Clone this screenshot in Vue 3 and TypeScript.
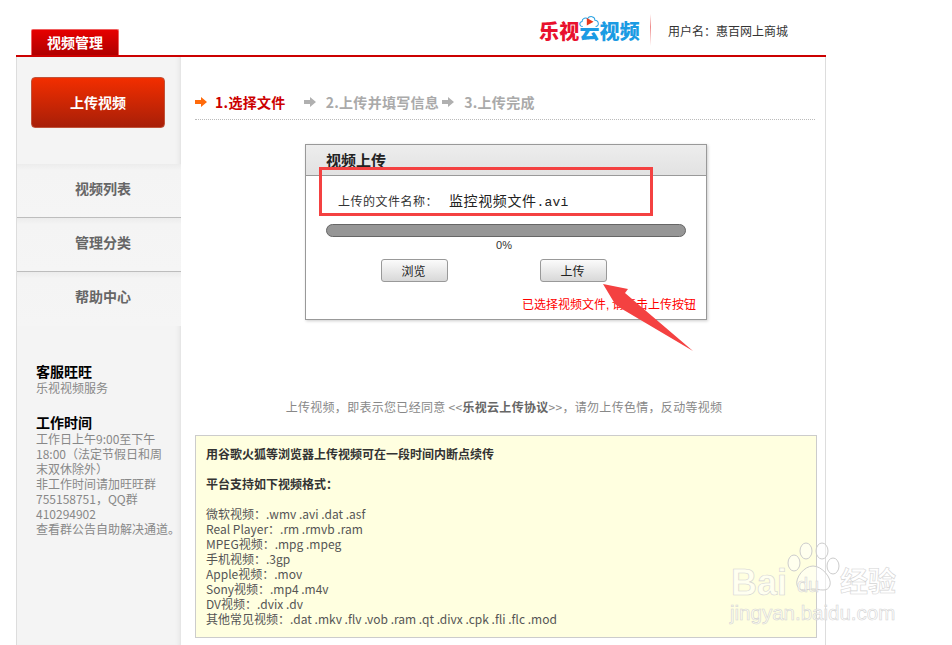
<script setup lang="ts">
const menuItems = ['视频列表', '管理分类', '帮助中心']

const workLines = [
  '工作日上午9:00至下午',
  '18:00（法定节假日和周',
  '末双休除外）',
  '非工作时间请加旺旺群',
  '755158751，QQ群',
  '410294902',
  '查看群公告自助解决通道。',
]

const formats = [
  '微软视频：.wmv .avi .dat .asf',
  'Real Player：.rm .rmvb .ram',
  'MPEG视频：.mpg .mpeg',
  '手机视频：.3gp',
  'Apple视频：.mov',
  'Sony视频：.mp4 .m4v',
  'DV视频：.dvix .dv',
  '其他常见视频：.dat .mkv .flv .vob .ram .qt .divx .cpk .fli .flc .mod',
]
</script>

<template>
  <div class="page">
    <header class="topbar">
      <div class="tab">视频管理</div>
      <div class="brand">
        <div class="logo">
          <span class="logo-red">乐视</span><span class="logo-blue">云视频</span>
          <svg class="logo-cloud" width="23" height="13" viewBox="0 0 34 18">
            <path d="M7 16.500C2 16.500 1 10 6 9C6 4 12 2.500 14 5C17 0 25 1 25 7C31 7 32 16.500 26 16.500" fill="#fff" stroke="#2ba3e3" stroke-width="1.500" />
            <path d="M13 4L23 9.500L13 15Z" fill="#e8391c" />
          </svg>
        </div>
        <div class="divider"></div>
        <div class="user">用户名：惠百网上商城</div>
      </div>
    </header>

    <div class="shell">
      <aside class="side">
        <button class="upload-btn">上传视频</button>
        <nav class="menu">
          <a v-for="item in menuItems" :key="item" class="menu-item">{{ item }}</a>
        </nav>
        <div class="service">
          <h4>客服旺旺</h4>
          <p>乐视视频服务</p>
          <h4 class="work-title">工作时间</h4>
          <p v-for="line in workLines" :key="line">{{ line }}</p>
        </div>
      </aside>

      <main class="main">
        <div class="steps">
          <svg class="step-arrow" width="12" height="12" viewBox="0 0 12 12"><path d="M0 4H6V1L12 6L6 11V8H0Z" fill="#ff6a0a" /></svg>
          <span class="step active">1.选择文件</span>
          <svg class="step-arrow second" width="12" height="12" viewBox="0 0 12 12"><path d="M0 4H6V1L12 6L6 11V8H0Z" fill="#b0b0b0" /></svg>
          <span class="step">2.上传并填写信息</span>
          <svg class="step-arrow third" width="12" height="12" viewBox="0 0 12 12"><path d="M0 4H6V1L12 6L6 11V8H0Z" fill="#b0b0b0" /></svg>
          <span class="step">3.上传完成</span>
        </div>

        <section class="dialog">
          <div class="dialog-head">视频上传</div>
          <div class="dialog-body">
            <div class="file-row">
              <span class="file-label">上传的文件名称：</span>
              <span class="file-name">监控视频文件<span class="file-ext">.avi</span></span>
            </div>
            <div class="progress"></div>
            <div class="percent">0%</div>
            <div class="actions">
              <button class="btn">浏览</button>
              <button class="btn">上传</button>
            </div>
            <div class="status">已选择视频文件<span class="comma">,</span> 请点击上传按钮</div>
          </div>
          <div class="mark-box"></div>
          <svg class="mark-arrow" width="100" height="75" viewBox="0 0 100 75">
            <path d="M5 3L30 8L27 12L95 70L24 28L17 23Z" fill="#f44141" />
          </svg>
        </section>

        <p class="agreement">上传视频，即表示您已经同意 &lt;&lt;<b>乐视云上传协议</b>&gt;&gt;，请勿上传色情，反动等视频</p>

        <section class="notice">
          <h5>用谷歌火狐等浏览器上传视频可在一段时间内断点续传</h5>
          <h5>平台支持如下视频格式：</h5>
          <p v-for="line in formats" :key="line">{{ line }}</p>
        </section>
      </main>
    </div>

    <div class="watermark">
      <svg class="paw" width="54" height="58" viewBox="0 0 54 58">
        <g fill="#fff" fill-opacity=".45" stroke="#ccc" stroke-width="1">
          <ellipse cx="20" cy="9" rx="6" ry="8" />
          <ellipse cx="36" cy="9" rx="6" ry="8" />
          <ellipse cx="8" cy="21" rx="6" ry="8" />
          <ellipse cx="47" cy="24" rx="6" ry="8" />
          <path d="M27 24C18 24 9 36 11 43C13 51 22 47 27 47C33 47 42 51 44 43C46 36 36 24 27 24Z" />
        </g>
      </svg>
      <span class="wm-bai">Bai</span>
      <span class="wm-du">du</span>
      <span class="wm-jy">经验</span>
      <span class="wm-url">jingyan.baidu.com</span>
    </div>
  </div>
</template>

<style scoped>
.page {
  position: relative;
  width: 952px;
  height: 645px;
  overflow: hidden;
  background: #fff;
  font-family: "Noto Sans CJK SC", "Liberation Sans", sans-serif;
  font-size: 12px;
  color: #666;
}

.topbar {
  display: flex;
  justify-content: space-between;
  align-items: flex-end;
  width: 810px;
  height: 57px;
  margin-left: 16px;
  padding-left: 15px;
  box-sizing: border-box;
  border-bottom: 2px solid #cc0000;
}

.tab {
  width: 88px;
  height: 26px;
  box-sizing: border-box;
  border: 1px solid #f06060;
  border-bottom: none;
  border-radius: 2px 2px 0 0;
  background: linear-gradient(#e60000, #b00000);
  color: #fff;
  font-size: 14px;
  font-weight: 700;
  line-height: 24px;
  text-align: center;
}

.brand {
  display: flex;
  align-items: center;
  height: 55px;
  padding-right: 38px;
  padding-top: 5px;
  box-sizing: border-box;
}

.logo {
  position: relative;
  font-size: 20px;
  font-weight: 900;
  line-height: 26px;
  letter-spacing: .2px;
  margin-top: 2px;
  white-space: nowrap;
}

.logo-red {
  color: #e8112d;
}

.logo-blue {
  color: #1b9be3;
}

.logo-cloud {
  position: absolute;
  left: 39px;
  top: -3px;
}

.divider {
  width: 1px;
  height: 32px;
  margin: 0 17px 0 10px;
  background: linear-gradient(rgba(230, 90, 90, 0), #ee8a8a 40%, rgba(230, 90, 90, 0));
}

.user {
  color: #333;
  white-space: nowrap;
}

.shell {
  display: flex;
  width: 810px;
  height: 588px;
  margin-left: 16px;
  box-sizing: border-box;
  border-right: 1px solid #ddd;
}

.side {
  flex: none;
  width: 165px;
  box-sizing: border-box;
  padding-top: 20px;
  border-left: 1px solid #ddd;
  background: #f4f4f4;
  box-shadow: inset -5px 0 5px -4px #ddd;
}

.upload-btn {
  display: block;
  width: 134px;
  height: 51px;
  margin-left: 14px;
  padding: 0 0 2px;
  border: 1px solid #c0533a;
  border-radius: 4px;
  background: linear-gradient(#f22e00, #a81f08);
  color: #fff;
  font: 700 14px "Noto Sans CJK SC", sans-serif;
}

.menu {
  margin-top: 36px;
}

.menu-item {
  display: block;
  height: 54px;
  box-sizing: border-box;
  padding-left: 8px;
  border-bottom: 1px solid #bdbdbd;
  background: linear-gradient(#ececec, #f4f4f4 12%, #f5f5f5);
  color: #666;
  font-size: 14px;
  font-weight: 700;
  line-height: 49px;
  text-align: center;
}

.menu-item:last-child {
  border-bottom: none;
}

.service {
  margin-top: 36px;
  padding-left: 19px;
  color: #888;
  line-height: 15px;
  white-space: nowrap;
}

.service h4 {
  margin: 0;
  color: #000;
  font-size: 14px;
  line-height: 18px;
}

.service p {
  margin: 0;
}

.service .work-title {
  margin-top: 18px;
}

.main {
  flex: 1;
  min-width: 0;
  padding: 0 0 0 14px;
}

.steps {
  display: flex;
  align-items: center;
  width: 620px;
  height: 63px;
  padding: 28px 0 0 0;
  box-sizing: border-box;
  border-bottom: 1px dotted #bbb;
  font-size: 14px;
  font-weight: 700;
  letter-spacing: .3px;
  color: #aaa;
}

.step-arrow {
  flex: none;
}

.step.active {
  margin-left: 8px;
  color: #cc0000;
}

.step-arrow.second {
  margin: 0 10px 0 18px;
}

.step-arrow.third {
  margin: 0 10px 0 3px;
}

.dialog {
  position: relative;
  width: 402px;
  height: 176px;
  box-sizing: border-box;
  margin: 24px 0 0 110px;
  border: 1px solid #999;
  box-shadow: 1px 1px 3px #ccc;
}

.dialog-head {
  height: 31px;
  box-sizing: border-box;
  padding-left: 20px;
  border-bottom: 1px solid #999;
  background: linear-gradient(#ededed, #e2e2e2);
  color: #222;
  font-size: 15px;
  font-weight: 700;
  line-height: 29px;
}

.dialog-body {
  padding: 15px 20px 0;
}

.file-row {
  display: flex;
  align-items: center;
  height: 18px;
  padding-left: 12px;
  color: #333;
}

.file-label {
  width: 111px;
  letter-spacing: .5px;
}

.file-name {
  color: #222;
  font-size: 14px;
  letter-spacing: .6px;
}

.file-ext {
  font: 13px "Liberation Mono", monospace;
  letter-spacing: .2px;
}

.progress {
  width: 360px;
  height: 13px;
  box-sizing: border-box;
  margin-top: 15px;
  border: 1px solid #666;
  border-radius: 7px;
  background: #969696;
}

.percent {
  width: 356px;
  height: 15px;
  margin-top: 1px;
  color: #333;
  font: 11px/15px "Liberation Sans", sans-serif;
  text-align: center;
}

.actions {
  display: flex;
  gap: 92px;
  margin: 6px 0 0 55px;
}

.btn {
  width: 67px;
  height: 23px;
  padding: 0 2px 0 0;
  border: 1px solid #999;
  border-radius: 3px;
  background: linear-gradient(#fbfbfb, #d8d8d8);
  color: #222;
  font: 12px "Noto Sans CJK SC", sans-serif;
}

.status {
  margin: 13px 0 0 196px;
  color: #f00;
  white-space: nowrap;
}

.comma {
  font-family: "Liberation Sans", sans-serif;
}

.mark-box {
  position: absolute;
  left: 13px;
  top: 22px;
  width: 334px;
  height: 49px;
  box-sizing: border-box;
  border: 3px solid #f44141;
}

.mark-arrow {
  position: absolute;
  left: 292px;
  top: 136px;
}

.agreement {
  width: 618px;
  margin: 79px 0 0 0;
  line-height: 16px;
  letter-spacing: .3px;
  color: #888;
  text-align: center;
  white-space: nowrap;
}

.agreement b {
  color: #666;
}

.notice {
  width: 622px;
  height: 203px;
  box-sizing: border-box;
  margin-top: 20px;
  padding: 10px 10px 0;
  border: 1px solid #ccc;
  background: #ffffe0;
  color: #555;
  line-height: 15px;
}

.notice h5 {
  margin: 0 0 15px;
  color: #333;
  font-size: 12px;
}

.notice p {
  margin: 0;
  white-space: nowrap;
}

.watermark {
  position: absolute;
  left: 730px;
  top: 540px;
  width: 200px;
  height: 105px;
  pointer-events: none;
  font-family: "Liberation Sans", "Noto Sans CJK SC", sans-serif;
  color: rgba(255, 255, 255, .55);
  -webkit-text-stroke: .6px #d4d4d4;
}

.paw {
  position: absolute;
  left: 56px;
  top: 2px;
}

.watermark span {
  position: absolute;
  white-space: nowrap;
}

.wm-bai {
  left: 1px;
  top: 23px;
  font-size: 36px;
  font-weight: 700;
  line-height: 40px;
}

.wm-du {
  left: 67px;
  top: 34px;
  font-size: 20px;
  line-height: 22px;
}

.wm-jy {
  left: 110px;
  top: 27px;
  font-size: 28px;
  font-weight: 700;
  line-height: 32px;
}

.wm-url {
  left: 0;
  top: 61px;
  font-size: 20.500px;
  line-height: 24px;
}
</style>

<style>
html,
body {
  margin: 0;
  overflow: hidden;
}
</style>
